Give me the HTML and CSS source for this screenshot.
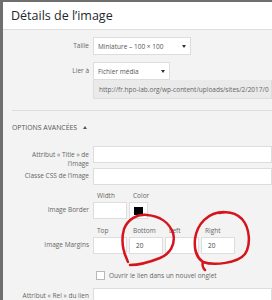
FILE: index.html
```html
<!DOCTYPE html>
<html lang="fr">
<head>
  <meta charset="UTF-8">
  <title>Détails de l’image</title>
  <link rel="stylesheet" href="styles.css">
</head>
<body>
<div class="frame">
  <header class="head">
    <h1>Détails de l’image</h1>
  </header>

  <div class="settings">
    <div class="row">
      <label class="lbl">Taille</label>
      <div class="select select-size">Miniature – 100 × 100<span class="caret"></span></div>
    </div>
    <div class="row row-link">
      <label class="lbl">Lier à</label>
      <div class="select select-link">Fichier média<span class="caret"></span></div>
    </div>
    <div class="url">http://fr.hpo-lab.org/wp-content/uploads/sites/2/2017/0</div>

    <div class="sep"></div>
    <div class="adv-title">Options avancées <span class="up"></span></div>

    <div class="row row-top row-title">
      <label class="lbl lbl-two">Attribut « Title » de l’image</label>
      <input class="field" type="text">
    </div>
    <div class="row row-css">
      <label class="lbl">Classe CSS de l’image</label>
      <input class="field" type="text">
    </div>

    <div class="sub-labels sub-border">
      <span>Width</span>
      <span>Color</span>
    </div>
    <div class="row">
      <label class="lbl">Image Border</label>
      <div class="boxes">
        <input class="small" type="text">
        <div class="color"><span class="swatch"></span></div>
      </div>
    </div>

    <div class="sub-labels sub-margins">
      <span>Top</span>
      <span>Bottom</span>
      <span>Left</span>
      <span>Right</span>
    </div>
    <div class="row">
      <label class="lbl">Image Margins</label>
      <div class="boxes">
        <input class="small" type="text">
        <input class="small" type="text" value="20">
        <input class="small" type="text">
        <input class="small" type="text" value="20">
      </div>
    </div>

    <div class="check-row">
      <span class="check"></span>
      <span>Ouvrir le lien dans un nouvel onglet</span>
    </div>

    <div class="row row-rel">
      <label class="lbl">Attribut « Rel » du lien</label>
      <input class="field" type="text">
    </div>
  </div>

  <!-- red pen marks drawn over the screenshot -->
  <svg class="marks" width="272" height="300" viewBox="0 0 272 300">
    <path d="M128,262 C123,252 121,240 124,229 C128,219 137,214 147,215 C159,216 169,222 173,233 C176,244 170,254 160,258 C150,262 139,265 130,265"/>
    <path d="M224,212 C208,212 197,224 195,239 C194,250 197,258 203,262 C214,266 238,263 245,254 C251,245 250,228 242,219 C236,213 228,211 219,213"/>
    <path d="M203,262 C202,265 203,268 205,270"/>
  </svg>
</div>
</body>
</html>
```

FILE: styles.css
```css
body {
  margin: 0;
  background: #f3f3f3;
  font-family: "Open Sans", "DejaVu Sans", sans-serif;
  font-size: 6.5px;
  color: #666;
}
.frame {
  position: relative;
  width: 272px;
  height: 300px;
  overflow: hidden;
  box-sizing: border-box;
  border-left: 3px solid #6f6f6f;
  border-top: 2px solid #6f6f6f;
  background: #f3f3f3;
}
.head {
  height: 27px;
  background: #fff;
  border-bottom: 1px solid #ddd;
  padding-left: 8px;
  display: flex;
  align-items: center;
}
.head h1 {
  margin: 0;
  font-size: 12.5px;
  font-weight: 400;
  color: #23282d;
}
.settings {
  padding-top: 7px;
}
.row {
  display: flex;
  align-items: center;
}
.row-top {
  align-items: flex-start;
}
.lbl {
  width: 86px;
  flex: none;
  box-sizing: border-box;
  margin-right: 4px;
  text-align: right;
  line-height: 8.5px;
}
.lbl-two {
  padding: 5px 0 0 18px;
}
.select {
  position: relative;
  height: 18px;
  box-sizing: border-box;
  border: 1px solid #ddd;
  background: #fff;
  padding-left: 4px;
  display: flex;
  align-items: center;
  color: #555;
  white-space: nowrap;
}
.select-size {
  width: 98px;
}
.select-link {
  width: 77px;
}
.caret {
  position: absolute;
  right: 4px;
  top: 7px;
  border-left: 2px solid transparent;
  border-right: 2px solid transparent;
  border-top: 3px solid #333;
}
.row-link {
  margin-top: 7px;
}
.url {
  margin-left: 90px;
  height: 19px;
  box-sizing: border-box;
  border: 1px solid #ddd;
  border-top: none;
  background: #eaeaea;
  padding-left: 5px;
  display: flex;
  align-items: center;
  white-space: nowrap;
  overflow: hidden;
  color: #666;
}
.sep {
  margin: 11px 0 0 9px;
  border-top: 1px solid #ddd;
}
.adv-title {
  margin: 10px 0 0 9px;
  line-height: 14px;
  font-size: 6.9px;
  text-transform: uppercase;
  color: #555;
}
.up {
  display: inline-block;
  margin-left: 4px;
  vertical-align: 1px;
  border-left: 2px solid transparent;
  border-right: 2px solid transparent;
  border-bottom: 3px solid #555;
}
.row-title {
  margin-top: 11px;
  height: 17px;
}
.row-css {
  margin-top: 5px;
}
.field {
  width: 200px;
  height: 17px;
  box-sizing: border-box;
  margin: 0;
  border: 1px solid #ddd;
  background: #fff;
  font: inherit;
}
.sub-labels {
  display: grid;
  grid-template-columns: repeat(4, 36px);
  margin-left: 94px;
  line-height: 10px;
  color: #666;
}
.sub-border {
  margin-top: 6px;
  margin-bottom: 1px;
}
.sub-margins {
  margin-top: 7px;
  margin-bottom: 1px;
}
.boxes {
  display: flex;
  gap: 2px;
}
.small {
  width: 34px;
  height: 17px;
  box-sizing: border-box;
  margin: 0;
  padding: 0 0 0 6px;
  border: 1px solid #ddd;
  background: #fff;
  font: inherit;
  color: #444;
}
.color {
  width: 19px;
  height: 17px;
  box-sizing: border-box;
  border: 1px solid #ddd;
  background: #fff;
  padding: 4px 0 0 4px;
}
.swatch {
  display: block;
  width: 9px;
  height: 8px;
  background: #000;
}
.check-row {
  display: flex;
  align-items: center;
  gap: 4px;
  margin: 16px 0 0 93px;
  height: 10px;
}
.check {
  width: 9px;
  height: 9px;
  box-sizing: border-box;
  border: 1px solid #b4b9be;
  background: #fff;
}
.row-rel {
  margin-top: 8px;
}
.marks {
  position: absolute;
  left: -3px;
  top: -2px;
  fill: none;
  stroke: #d5141c;
  stroke-width: 2.5;
  stroke-linecap: round;
}
```
